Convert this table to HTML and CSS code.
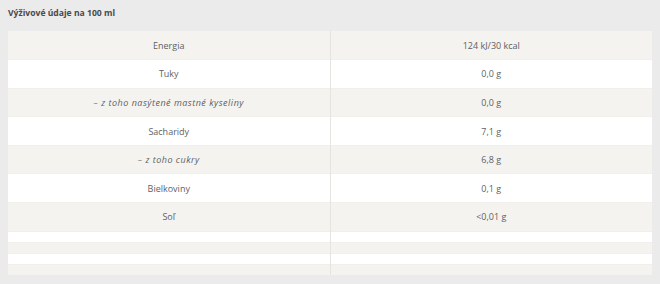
FILE: index.html
```html
<!DOCTYPE html>
<html lang="sk">
<head>
<meta charset="utf-8">
<title>Výživové údaje</title>
<link rel="stylesheet" href="styles.css">
</head>
<body>
<section class="nutrition">
  <h3 class="nutrition__title">Výživové údaje na 100 ml</h3>
  <table class="nutrition__table">
    <tbody>
      <tr><td>Energia</td><td>124 kJ/30 kcal</td></tr>
      <tr><td>Tuky</td><td>0,0 g</td></tr>
      <tr><td><em>– z toho nasýtené mastné kyseliny</em></td><td>0,0 g</td></tr>
      <tr><td>Sacharidy</td><td>7,1 g</td></tr>
      <tr><td><em>– z toho cukry</em></td><td>6,8 g</td></tr>
      <tr><td>Bielkoviny</td><td>0,1 g</td></tr>
      <tr><td>Soľ</td><td>&lt;0,01 g</td></tr>
      <tr class="empty"><td></td><td></td></tr>
      <tr class="empty"><td></td><td></td></tr>
      <tr class="empty"><td></td><td></td></tr>
      <tr class="empty"><td></td><td></td></tr>
    </tbody>
  </table>
</section>
</body>
</html>
```
FILE: styles.css
```css
html, body {
  margin: 0;
  padding: 0;
  background: #ebebeb;
}
body {
  font-family: "Open Sans", "DejaVu Sans", sans-serif;
  color: #5f5f5f;
}
.nutrition {
  padding: 6px 8px 0 8px;
}
.nutrition__title {
  margin: 0;
  font-size: 8.6px;
  line-height: 15px;
  font-weight: 700;
  color: #4a4a4a;
  height: 25px;
}
.nutrition__table {
  width: 644px;
  border-collapse: collapse;
  table-layout: fixed;
}
.nutrition__table td {
  text-align: center;
  font-size: 9px;
  height: 28.6px;
  padding: 0 6px;
  vertical-align: middle;
  box-sizing: border-box;
  border-top: 1px solid #f0efec;
}
.nutrition__table td:first-child {
  width: 322px;
  border-right: 1px solid #e6e4df;
}
.nutrition__table tr:nth-child(odd) td {
  background: #f4f3f0;
}
.nutrition__table tr:nth-child(even) td {
  background: #ffffff;
}
.nutrition__table tr:first-child td {
  border-top: none;
}
.nutrition__table tr.empty td {
  height: 11px;
}
.nutrition__table em {
  font-style: italic;
  letter-spacing: 0.5px;
}
```
